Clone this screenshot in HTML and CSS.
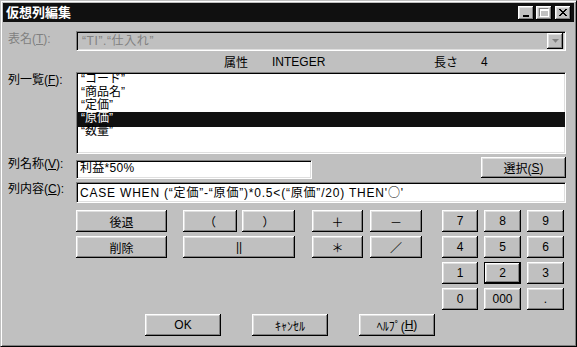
FILE: index.html
```html
<!DOCTYPE html>
<html lang="ja">
<head>
  <meta charset="UTF-8">
  <title>仮想列編集</title>
  <link rel="stylesheet" href="styles.css">
</head>
<body>
  <div class="window">
    <div class="titlebar">
      <span class="title">仮想列編集</span>
      <div class="title-buttons">
        <span class="tbtn tbtn-min"><i></i></span>
        <span class="tbtn tbtn-max"><i></i></span>
        <span class="tbtn tbtn-close">
          <svg width="8" height="7" viewBox="0 0 8 7"><path d="M0 0h2v1h1v1h2V1h1V0h2v1H7v1H6v1H5v1h1v1h1v1h1v1H6V6H5V5H3v1H2v1H0V6h1V5h1V4h1V3H2V2H1V1H0z" fill="#000"/></svg>
        </span>
      </div>
    </div>

    <div class="form">
      <div class="row row-table">
        <label class="label label-disabled">表名(<u>T</u>):</label>
        <div class="combo">
          <span class="combo-text">“TI”.“仕入れ”</span>
          <span class="combo-btn">
            <svg width="7" height="5" viewBox="0 0 7 5"><path d="M1 1h5L3.5 4z" fill="#fff"/><path d="M0 0h7L3.5 4z" fill="#808080"/></svg>
          </span>
        </div>
      </div>

      <div class="attr-row">
        <span class="attr-name">属性</span>
        <span class="attr-type">INTEGER</span>
        <span class="attr-len">長さ</span>
        <span class="attr-val">4</span>
      </div>

      <div class="row row-list">
        <label class="label">列一覧(<u>F</u>):</label>
        <ul class="listbox">
          <li>“コード”</li>
          <li>“商品名”</li>
          <li>“定価”</li>
          <li class="selected">“原価”</li>
          <li>“数量”</li>
        </ul>
      </div>

      <div class="row row-name">
        <label class="label">列名称(<u>V</u>):</label>
        <div class="field field-name">利益*50%</div>
        <button class="btn btn-select">選択(<u>S</u>)</button>
      </div>

      <div class="row row-content">
        <label class="label">列内容(<u>C</u>):</label>
        <div class="field field-content">CASE WHEN (“定価”-“原価”)*0.5&lt;(“原価”/20) THEN'<span class="jp">○</span>'</div>
      </div>

      <div class="keys">
        <div class="group g-edit">
          <button class="btn">後退</button>
          <button class="btn">削除</button>
        </div>
        <div class="group g-paren">
          <button class="btn">（</button>
          <button class="btn">）</button>
          <button class="btn wide">||</button>
        </div>
        <div class="group g-op">
          <button class="btn">＋</button>
          <button class="btn">－</button>
          <button class="btn">＊</button>
          <button class="btn">／</button>
        </div>
        <div class="group g-num">
          <button class="btn">7</button>
          <button class="btn">8</button>
          <button class="btn">9</button>
          <button class="btn">4</button>
          <button class="btn">5</button>
          <button class="btn">6</button>
          <button class="btn">1</button>
          <button class="btn btn-default">2</button>
          <button class="btn">3</button>
          <button class="btn">0</button>
          <button class="btn">000</button>
          <button class="btn">.</button>
        </div>
      </div>

      <div class="actions">
        <button class="btn btn-action">OK</button>
        <button class="btn btn-action">ｷｬﾝｾﾙ</button>
        <button class="btn btn-action">ﾍﾙﾌﾟ(<u>H</u>)</button>
      </div>
    </div>
  </div>
</body>
</html>
```

FILE: styles.css
```css
* {
  box-sizing: border-box;
}

body {
  margin: 0;
  background-color: #c0c0c0;
  font-family: "Liberation Sans", "Noto Sans CJK JP", sans-serif;
  font-size: 12px;
  color: #000;
}

.jp {
  font-family: "Noto Sans CJK JP", sans-serif;
}

.window {
  width: 577px;
  height: 347px;
  background-color: #c0c0c0;
  border: 1px solid;
  border-color: #c0c0c0 #000 #000 #c0c0c0;
  box-shadow: inset 1px 1px #fff, inset -1px -1px #808080;
  padding: 2px;
}

/* title bar */
.titlebar {
  height: 19px;
  background-color: #101010;
  display: flex;
  align-items: center;
  padding: 0 3px 0 3px;
}

.title {
  color: #fff;
  font-weight: bold;
  font-size: 13px;
  line-height: 19px;
}

.title-buttons {
  margin-left: auto;
  display: flex;
}

.tbtn {
  width: 16px;
  height: 14px;
  background-color: #c0c0c0;
  box-shadow: inset -1px -1px #000, inset 1px 1px #fff, inset -2px -2px #808080, inset 2px 2px #dfdfdf;
  display: flex;
  align-items: center;
  justify-content: center;
}

.tbtn-max {
  margin-left: 2px;
}

.tbtn-close {
  margin-left: 3px;
}

.tbtn-min i {
  width: 6px;
  height: 2px;
  background-color: #000;
  margin-top: 6px;
}

.tbtn-max i {
  width: 9px;
  height: 8px;
  border: 1px solid #fff;
  border-top-width: 2px;
  box-shadow: -1px -1px #808080;
}

/* form */
.form {
  padding: 0 8px 0 5px;
}

.row {
  display: flex;
}

.label {
  width: 68px;
  flex: none;
  line-height: 14px;
  white-space: nowrap;
}

.label-disabled {
  color: #808080;
}

.combo,
.listbox,
.field {
  border: 1px solid;
  border-color: #808080 #fff #fff #808080;
  box-shadow: inset 1px 1px #000, inset -1px -1px #dfdfdf;
}

.row-table {
  margin-top: 9px;
  height: 20px;
}

.row-table .label {
  padding-top: 1px;
}

.combo {
  flex: 1;
  height: 20px;
  display: flex;
  align-items: center;
  padding: 0 2px 0 5px;
}

.combo-text {
  color: #808080;
  line-height: 14px;
  letter-spacing: 0.6px;
}

.combo-btn {
  margin-left: auto;
  width: 16px;
  height: 16px;
  box-shadow: inset -1px -1px #000, inset 1px 1px #fff, inset -2px -2px #808080, inset 2px 2px #dfdfdf;
  display: flex;
  align-items: center;
  justify-content: center;
}

.attr-row {
  height: 21px;
  display: flex;
  align-items: center;
  padding-left: 216px;
}

.attr-name {
  width: 48px;
}

.attr-type {
  width: 162px;
}

.attr-len {
  width: 47px;
}

.row-list {
  height: 82px;
}

.row-list .label {
  padding-top: 1px;
}

.listbox {
  flex: 1;
  margin: 0;
  padding: 0 2px;
  list-style: none;
  background-color: #fff;
  overflow: hidden;
}

.listbox li {
  height: 13px;
  line-height: 13px;
  padding-left: 2px;
  white-space: nowrap;
}

.listbox li.selected {
  height: 15px;
  margin: 0 -2px -2px;
  padding-left: 4px;
  background-color: #101010;
  color: #fff;
}

.row-name {
  margin-top: 3px;
  height: 22px;
}

.field {
  background-color: #fff;
  padding: 0 3px;
  line-height: 15px;
  white-space: nowrap;
  overflow: hidden;
}

.field-name {
  width: 236px;
  height: 19px;
  margin-top: 3px;
  letter-spacing: 0.3px;
}

.row-content {
  margin-top: 3px;
  height: 21px;
}

.field-content {
  flex: 1;
  height: 21px;
  line-height: 17px;
  letter-spacing: 0.8px;
}

/* buttons */
.btn {
  background-color: #c0c0c0;
  border: none;
  padding: 0;
  margin: 0;
  font: inherit;
  color: #000;
  height: 22px;
  box-shadow: inset -1px -1px #000, inset 1px 1px #fff, inset -2px -2px #808080, inset 2px 2px #dfdfdf;
  display: flex;
  align-items: center;
  justify-content: center;
}

.btn-select {
  margin-left: auto;
  width: 85px;
  height: 21px;
}

.btn-default {
  border: 1px solid #000;
}

.keys {
  margin: 7px 0 0 68px;
  display: flex;
  align-items: flex-start;
}

.group {
  display: grid;
  grid-auto-rows: 22px;
  row-gap: 4px;
}

.g-edit {
  grid-template-columns: 91px;
}

.g-paren {
  margin-left: 16px;
  grid-template-columns: 54px 53px;
  column-gap: 5px;
}

.g-paren .wide {
  grid-column: span 2;
}

.g-op {
  margin-left: 17px;
  grid-template-columns: 51px 52px;
  column-gap: 7px;
}

.g-num {
  margin-left: 20px;
  grid-template-columns: 36px 37px 37px;
  column-gap: 6px;
}

.actions {
  margin-top: 4px;
  padding-left: 137px;
  display: flex;
  gap: 31px;
}

.btn-action {
  width: 76px;
}
```
